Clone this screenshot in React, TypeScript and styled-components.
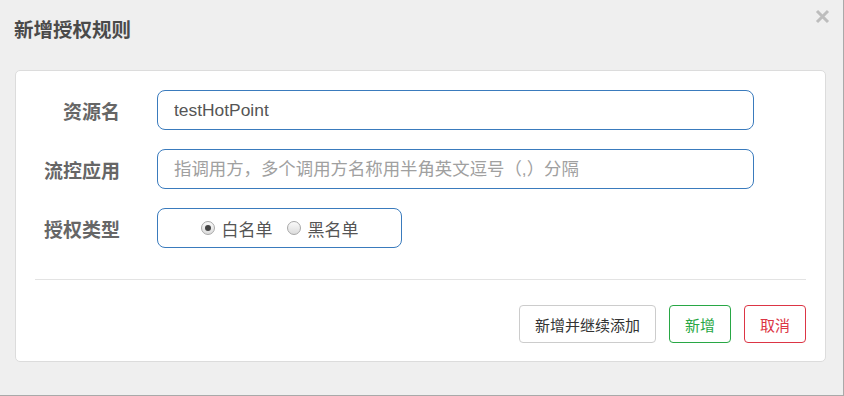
import React, { useState } from "react";
import styled, { createGlobalStyle } from "styled-components";

const GlobalStyle = createGlobalStyle`
  html, body {
    margin: 0;
    padding: 0;
    background-color: #efefef;
  }
  * {
    box-sizing: border-box;
  }
`;

const FONT = `"Liberation Sans", Arial, "Noto Sans CJK SC", sans-serif`;

const Modal = styled.div`
  position: relative;
  width: 844px;
  height: 396px;
  background-color: #efefef;
  border-right: 1px solid #a9a9a9;
  border-bottom: 1px solid #a9a9a9;
  font-family: ${FONT};
`;

const Header = styled.div`
  height: 70px;
  padding: 18px 14px 0;
`;

const Title = styled.h3`
  margin: 0;
  font-size: 19.5px;
  line-height: 24px;
  font-weight: bold;
  color: #4a4a4a;
`;

const CloseButton = styled.button`
  position: absolute;
  top: 9px;
  right: 13px;
  width: 15px;
  height: 15px;
  padding: 0;
  border: none;
  background: transparent;
  cursor: pointer;
  display: flex;
`;

const Card = styled.div`
  width: 811px;
  height: 292px;
  margin-left: 15px;
  background-color: #fff;
  border: 1px solid #dcdcdc;
  border-radius: 5px;
  padding: 19px 19px 0;
`;

const Form = styled.div`
  display: grid;
  grid-template-columns: 85px 1fr;
  column-gap: 37px;
  row-gap: 19px;
  align-items: center;
`;

const Label = styled.label`
  text-align: right;
  font-size: 19px;
  font-weight: bold;
  color: #666;
  white-space: nowrap;
`;

const Input = styled.input`
  width: 597px;
  height: 40px;
  padding: 0 16px;
  border: 1px solid #3a7bbd;
  border-radius: 8px;
  font-family: ${FONT};
  font-size: 17.4px;
  color: #555;
  outline: none;

  &::placeholder {
    color: #a0a0a0;
  }
`;

const RadioBox = styled.div`
  width: 245px;
  height: 40px;
  border: 1px solid #3a7bbd;
  border-radius: 8px;
  display: flex;
  align-items: center;
  justify-content: center;
  gap: 14px;
`;

const RadioOption = styled.label`
  display: flex;
  align-items: center;
  gap: 7px;
  font-size: 17px;
  color: #555;
  cursor: pointer;
`;

const RadioDot = styled.span<{ $checked: boolean }>`
  width: 14px;
  height: 14px;
  border-radius: 50%;
  border: 1px solid #a8a8a8;
  background: linear-gradient(#fafafa, #dcdcdc);
  display: flex;
  align-items: center;
  justify-content: center;

  &::after {
    content: "";
    width: 6px;
    height: 6px;
    border-radius: 50%;
    background-color: #444;
    display: ${(p) => (p.$checked ? "block" : "none")};
  }
`;

const Divider = styled.hr`
  margin: 31px 0 0;
  border: none;
  border-top: 1px solid #e3e3e3;
`;

const Footer = styled.div`
  display: flex;
  justify-content: flex-end;
  gap: 13px;
  margin-top: 25px;
`;

const Button = styled.button<{ $variant?: "default" | "success" | "danger" }>`
  height: 38px;
  padding: 0 15px;
  border-radius: 4px;
  background-color: #fff;
  font-family: ${FONT};
  font-size: 15px;
  cursor: pointer;
  border: 1px solid
    ${(p) =>
      p.$variant === "success" ? "#28a745" : p.$variant === "danger" ? "#dc3545" : "#cccccc"};
  color: ${(p) =>
    p.$variant === "success" ? "#28a745" : p.$variant === "danger" ? "#dc3545" : "#333"};
`;

const App = () => {
  const [resource, setResource] = useState("testHotPoint");
  const [limitApp, setLimitApp] = useState("");
  const [strategy, setStrategy] = useState(0);

  return (
    <>
      <GlobalStyle />
      <Modal>
        <Header>
          <Title>新增授权规则</Title>
        </Header>
        <CloseButton aria-label="关闭">
          <svg width="15" height="15" viewBox="0 0 15 15">
            <path d="M2 2 L13 13 M13 2 L2 13" stroke="#bdbdbd" strokeWidth="3" />
          </svg>
        </CloseButton>
        <Card>
          <Form>
            <Label>资源名</Label>
            <Input value={resource} onChange={(e) => setResource(e.target.value)} />
            <Label>流控应用</Label>
            <Input
              placeholder="指调用方，多个调用方名称用半角英文逗号（,）分隔"
              value={limitApp}
              onChange={(e) => setLimitApp(e.target.value)}
            />
            <Label>授权类型</Label>
            <RadioBox>
              <RadioOption onClick={() => setStrategy(0)}>
                <RadioDot $checked={strategy === 0} />
                白名单
              </RadioOption>
              <RadioOption onClick={() => setStrategy(1)}>
                <RadioDot $checked={strategy === 1} />
                黑名单
              </RadioOption>
            </RadioBox>
          </Form>
          <Divider />
          <Footer>
            <Button>新增并继续添加</Button>
            <Button $variant="success">新增</Button>
            <Button $variant="danger">取消</Button>
          </Footer>
        </Card>
      </Modal>
    </>
  );
};

export default App;
